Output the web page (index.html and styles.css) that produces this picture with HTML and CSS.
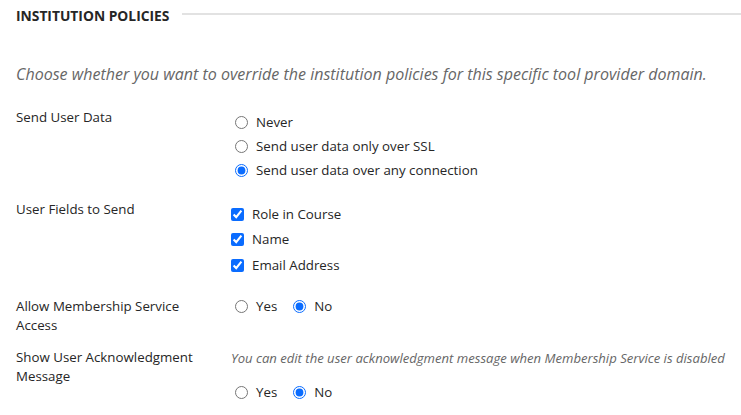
FILE: index.html
```html
<!DOCTYPE html>
<html>
<head>
<meta charset="utf-8">
<link rel="stylesheet" href="styles.css">
</head>
<body>
<div class="page">
  <div class="heading">
    <h2 class="title">INSTITUTION POLICIES</h2>
    <div class="rule"></div>
  </div>
  <p class="intro">Choose whether you want to override the institution policies for this specific tool provider domain.</p>

  <div class="row row-send">
    <div class="label label-send">Send User Data</div>
    <div class="controls radios">
      <label class="opt radio"><input type="radio" name="send"><span>Never</span></label>
      <label class="opt radio"><input type="radio" name="send"><span>Send user data only over SSL</span></label>
      <label class="opt radio"><input type="radio" name="send" checked><span>Send user data over any connection</span></label>
    </div>
  </div>

  <div class="row row-fields">
    <div class="label">User Fields to Send</div>
    <div class="controls checks">
      <label class="opt check"><input type="checkbox" checked><span>Role in Course</span></label>
      <label class="opt check"><input type="checkbox" checked><span>Name</span></label>
      <label class="opt check"><input type="checkbox" checked><span>Email Address</span></label>
    </div>
  </div>

  <div class="row row-member">
    <div class="label">Allow Membership Service<br>Access</div>
    <div class="controls inline">
      <label class="opt radio"><input type="radio" name="mem"><span>Yes</span></label>
      <label class="opt radio"><input type="radio" name="mem" checked><span>No</span></label>
    </div>
  </div>

  <div class="row row-ack">
    <div class="label">Show User Acknowledgment<br>Message</div>
    <div class="controls">
      <p class="note">You can edit the user acknowledgment message when Membership Service is disabled</p>
      <div class="inline ack-opts">
        <label class="opt radio"><input type="radio" name="ack"><span>Yes</span></label>
        <label class="opt radio"><input type="radio" name="ack" checked><span>No</span></label>
      </div>
    </div>
  </div>
</div>
</body>
</html>
```

FILE: styles.css
```css
html, body {
  margin: 0;
  padding: 0;
  background: #ffffff;
}

body {
  font-family: "Open Sans", "Liberation Sans", sans-serif;
  font-size: 13.3px;
  line-height: 19px;
  color: #262626;
}

.page {
  padding: 6px 0 0 16px;
}

.heading {
  display: flex;
  align-items: center;
  gap: 13px;
  height: 19px;
}

.title {
  margin: 0;
  font-size: 13.8px;
  font-weight: 700;
  color: #262626;
  white-space: nowrap;
}

.rule {
  flex: 1;
  height: 2px;
  margin-top: -3px;
  background: #e2e2e2;
}

.intro {
  margin: 38px 0 0 0;
  font-style: italic;
  font-size: 16.05px;
  line-height: 22px;
  color: #666666;
  white-space: nowrap;
}

.row {
  display: grid;
  grid-template-columns: 215px 1fr;
}

.row-send { margin-top: 22px; }
.row-fields { margin-top: 18px; }
.row-member { margin-top: 18.5px; }
.row-ack { margin-top: 13px; }

.label {
  color: #262626;
}

.label-send {
  padding-top: 1px;
}

.controls {
  display: flex;
  flex-direction: column;
}

.radios { margin-top: 3px; }
.checks { margin-top: 1.5px; }

.opt {
  display: flex;
  align-items: center;
  gap: 8px;
}

.radio {
  height: 24px;
  padding-left: 4px;
}

.check {
  height: 25.5px;
}

.opt input {
  margin: 0;
  width: 13px;
  height: 13px;
  accent-color: #0a6cff;
}

.inline {
  flex-direction: row;
  display: flex;
  gap: 12px;
}

.row-member .inline {
  margin-top: -2px;
  align-self: start;
}

.note {
  margin: 1.5px 0 0 0;
  font-style: italic;
  font-size: 13.1px;
  color: #666666;
  white-space: nowrap;
}

.ack-opts {
  margin-top: 12px;
}
```
